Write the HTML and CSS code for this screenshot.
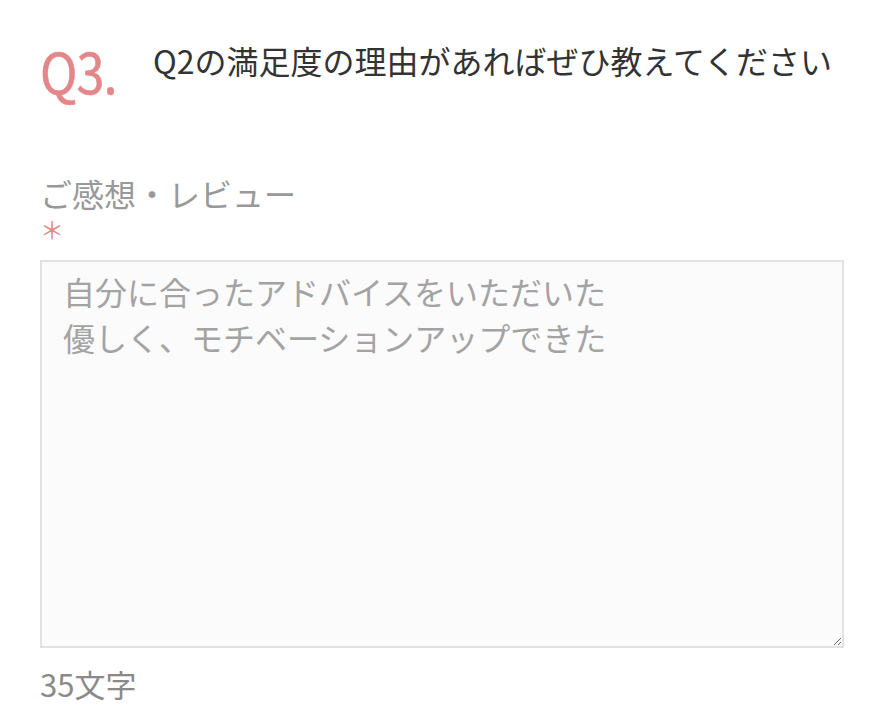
FILE: index.html
```html
<!DOCTYPE html>
<html lang="ja">

<head>
    <meta charset="UTF-8">
    <meta name="viewport" content="width=device-width, initial-scale=1.0">
    <title>アンケート</title>
    <link rel="stylesheet" href="styles.css">
</head>

<body>

    <div class="question">
        <div class="question-head">
            <span class="question-no">Q3.</span>
            <h2 class="question-title">Q2の満足度の理由があればぜひ教えてください</h2>
        </div>

        <div class="form-group">
            <label for="review">ご感想・レビュー</label>
            <div class="required">＊</div>
            <textarea id="review" placeholder="自分に合ったアドバイスをいただいた&#10;優しく、モチベーションアップできた"></textarea>
            <div class="counter">35文字</div>
        </div>
    </div>

</body>

</html>
```

FILE: styles.css
```css
body {
    font-family: "Noto Sans CJK JP", "Noto Sans", sans-serif;
    margin: 0;
    background-color: #fff;
}

.question {
    padding: 38px 50px 0 40px;
}

.question-head {
    display: flex;
    align-items: flex-start;
}

.question-no {
    width: 113px;
    flex-shrink: 0;
    margin-top: 2px;
    font-size: 56px;
    line-height: 60px;
    letter-spacing: -1px;
    color: #e4878a;
    -webkit-text-stroke: 0.6px #e4878a;
    transform: scaleX(0.9);
    transform-origin: left;
}

.question-title {
    margin: 0;
    font-size: 32px;
    font-weight: normal;
    line-height: 44px;
    color: #333;
    white-space: nowrap;
}

.form-group {
    margin-top: 74px;
}

label {
    display: block;
    font-size: 32px;
    line-height: 38px;
    color: #999;
}

.required {
    margin-top: 4px;
    font-size: 24px;
    line-height: 26px;
    color: #e28a80;
}

textarea {
    display: block;
    box-sizing: border-box;
    width: 100%;
    height: 388px;
    margin-top: 18px;
    padding: 6px 21px;
    border: 2px solid #e2e2e2;
    background-color: #fbfbfb;
    font-family: inherit;
    font-size: 32px;
    line-height: 46px;
    resize: vertical;
}

textarea::placeholder {
    color: #a3a3a3;
}

.counter {
    margin-top: 16px;
    font-size: 31px;
    line-height: 40px;
    color: #8a8a8a;
}
```
